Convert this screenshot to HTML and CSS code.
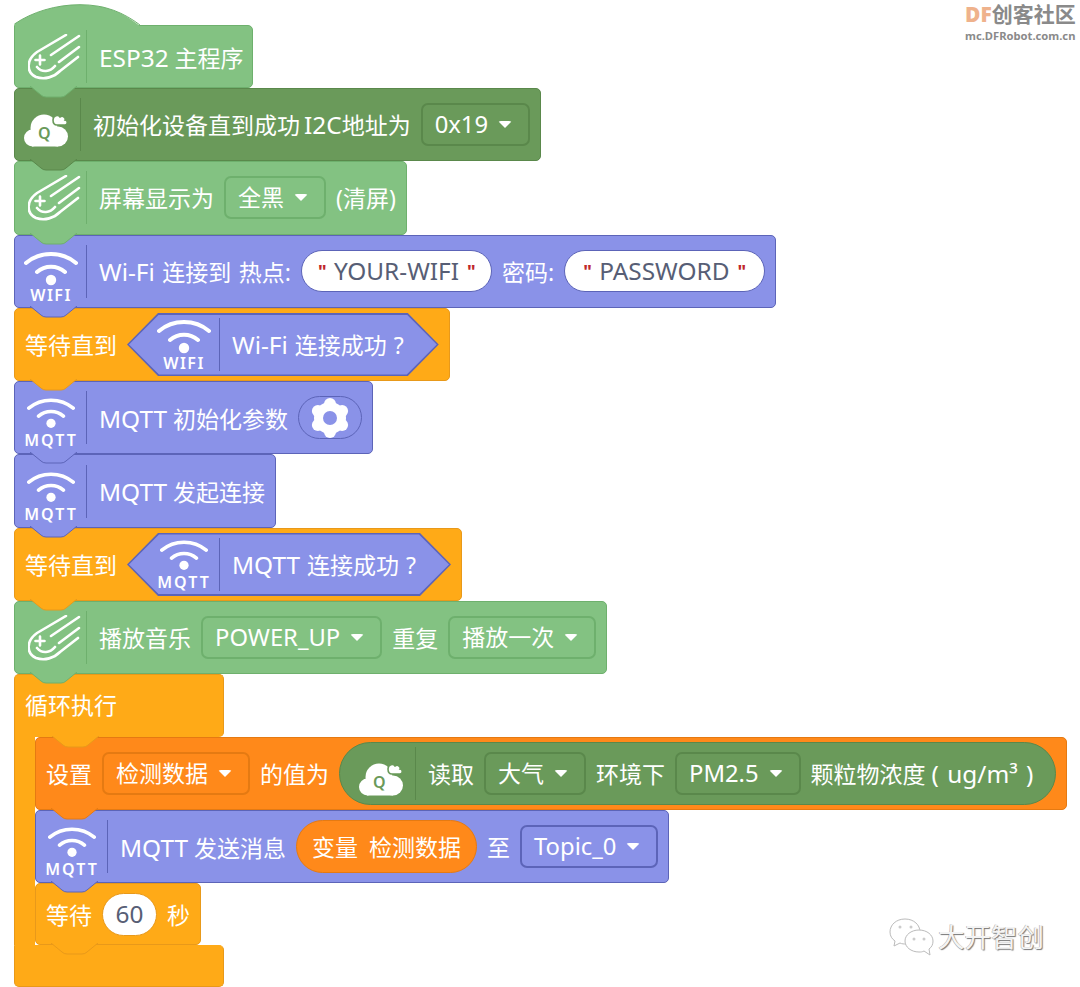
FILE: index.html
```html
<!DOCTYPE html>
<html lang="zh-CN">
<head>
    <meta charset="UTF-8">
    <meta name="viewport" content="width=device-width, initial-scale=1.0">
    <title>ESP32 主程序</title>
    <link rel="stylesheet" href="styles.css">
</head>
<body>
    <!-- Shared icon shapes -->
    <svg class="defs" aria-hidden="true">
        <symbol id="meteor" viewBox="0 0 54 46">
            <path d="M38 1 L9 18 C-2 26 -2 38 8 43 C17 46 26 43 32 37 L50 23 M51 2 L23 21 M51 13 L31 28 M9 33 C14 39 22 38 27 32 M12 21.5 V30.5 M7.5 26 H16.5" fill="none" stroke="#fff" stroke-width="2.6" stroke-linecap="round" stroke-linejoin="round"/>
        </symbol>
        <symbol id="arcs" viewBox="0 0 54 34">
            <path d="M2 11 C16 -1 38 -1 52 11 M13 20 C21 13 33 13 41 20" fill="none" stroke="#fff" stroke-width="4" stroke-linecap="round"/>
            <circle cx="27" cy="28" r="5.2" fill="#fff"/>
        </symbol>
        <symbol id="cloud" viewBox="0 0 44 33">
            <circle cx="8.5" cy="24" r="8.5" fill="#fff"/>
            <circle cx="20" cy="14" r="13.5" fill="#fff"/>
            <circle cx="34" cy="22.5" r="10" fill="#fff"/>
            <rect x="8" y="20" width="26" height="12.5" fill="#fff"/>
            <path d="M29 6 C29 2 34 0 36 3 C39 1 42 4 41 6 C44 6 44 11 41 11 H33 C30 11 29 9 29 6 Z" fill="#fff" stroke="#6a9a5a" stroke-width="1.6"/>
        </symbol>
        <symbol id="gear" viewBox="0 0 40 40">
            <circle cx="20" cy="20" r="16" fill="#fff"/>
            <circle cx="20" cy="6" r="6" fill="#fff"/>
            <circle cx="20" cy="34" r="6" fill="#fff"/>
            <circle cx="7.9" cy="13" r="6" fill="#fff"/>
            <circle cx="32.1" cy="13" r="6" fill="#fff"/>
            <circle cx="7.9" cy="27" r="6" fill="#fff"/>
            <circle cx="32.1" cy="27" r="6" fill="#fff"/>
            <circle cx="20" cy="20" r="7" fill="#8a92e8"/>
        </symbol>
        <symbol id="notch" viewBox="0 0 47 12">
            <path class="notch-fill" d="M0 0 L11 9 Q13 11 16 11 H31 Q34 11 36 9 L47 0 Z"/>
            <path class="notch-line" d="M0 0 L11 9 Q13 11 16 11 H31 Q34 11 36 9 L47 0"/>
        </symbol>
    </svg>

    <div class="board">
        <svg class="hat" width="127" height="22" viewBox="0 0 127 22"><path d="M0.5 22 V20 C18 8 42 0.7 66 0.7 C92 0.7 110 9 126 22 Z" fill="#83c282"/><path d="M0.5 20 C18 8 42 0.7 66 0.7 C92 0.7 110 9 126 21" fill="none" stroke="#6eb06d"/></svg>

        <div class="block green block-hat">
            <div class="icon-slot"><svg class="meteor"><use href="#meteor"/></svg></div>
            <span class="label first-label"><span class="en">ESP32</span> 主程序</span>
            <svg class="tab"><use href="#notch"/></svg>
        </div>

        <div class="block forest">
            <div class="icon-slot icon-slot-cloud"><svg class="cloud"><use href="#cloud"/></svg><span class="cloud-q">Q</span></div>
            <span class="label first-label label-tight">初始化设备直到成功 <span class="en">I2C</span>地址为</span>
            <span class="select"><span class="en">0x19</span></span>
            <svg class="tab"><use href="#notch"/></svg>
        </div>

        <div class="block green">
            <div class="icon-slot"><svg class="meteor"><use href="#meteor"/></svg></div>
            <span class="label first-label">屏幕显示为</span>
            <span class="select">全黑</span>
            <span class="label">(清屏)</span>
            <svg class="tab"><use href="#notch"/></svg>
        </div>

        <div class="block blue">
            <div class="icon-slot icon-slot-wifi"><svg class="arcs"><use href="#arcs"/></svg><span class="icon-label">WIFI</span></div>
            <span class="label first-label label-spaced"><span class="en">Wi-Fi</span> 连接到 热点:</span>
            <span class="text-input"><i>"</i><span class="en">YOUR-WIFI</span><i>"</i></span>
            <span class="label">密码:</span>
            <span class="text-input text-input-wide"><i>"</i><span class="en">PASSWORD</span><i>"</i></span>
            <svg class="tab"><use href="#notch"/></svg>
        </div>

        <div class="block amber">
            <span class="label">等待直到</span>
            <div class="hex blue">
                <div class="icon-slot icon-slot-wifi"><svg class="arcs"><use href="#arcs"/></svg><span class="icon-label">WIFI</span></div>
                <span class="label"><span class="en">Wi-Fi</span> 连接成功 ?</span>
            </div>
            <svg class="tab"><use href="#notch"/></svg>
        </div>

        <div class="block blue">
            <div class="icon-slot icon-slot-wifi"><svg class="arcs arcs-small"><use href="#arcs"/></svg><span class="icon-label">MQTT</span></div>
            <span class="label first-label"><span class="en">MQTT</span> 初始化参数</span>
            <span class="gear-pill"><svg class="gear"><use href="#gear"/></svg></span>
            <svg class="tab"><use href="#notch"/></svg>
        </div>

        <div class="block blue">
            <div class="icon-slot icon-slot-wifi"><svg class="arcs arcs-small"><use href="#arcs"/></svg><span class="icon-label">MQTT</span></div>
            <span class="label first-label"><span class="en">MQTT</span> 发起连接</span>
            <svg class="tab"><use href="#notch"/></svg>
        </div>

        <div class="block amber">
            <span class="label">等待直到</span>
            <div class="hex blue">
                <div class="icon-slot icon-slot-wifi"><svg class="arcs arcs-small"><use href="#arcs"/></svg><span class="icon-label">MQTT</span></div>
                <span class="label"><span class="en">MQTT</span> 连接成功 ?</span>
            </div>
            <svg class="tab"><use href="#notch"/></svg>
        </div>

        <div class="block green">
            <div class="icon-slot"><svg class="meteor"><use href="#meteor"/></svg></div>
            <span class="label first-label">播放音乐</span>
            <span class="select"><span class="en">POWER_UP</span></span>
            <span class="label">重复</span>
            <span class="select">播放一次</span>
            <svg class="tab"><use href="#notch"/></svg>
        </div>

        <!-- Forever loop -->
        <div class="loop amber">
            <div class="loop-head">
                <span class="label">循环执行</span>
                <svg class="tab tab-loop"><use href="#notch"/></svg>
            </div>
            <div class="loop-body">
                <div class="loop-arm"></div>
                <div class="loop-stack">
                    <div class="block orange">
                        <span class="label">设置</span>
                        <span class="select">检测数据</span>
                        <span class="label">的值为</span>
                        <div class="reporter forest">
                            <div class="icon-slot icon-slot-cloud"><svg class="cloud"><use href="#cloud"/></svg><span class="cloud-q">Q</span></div>
                            <span class="label first-label">读取</span>
                            <span class="select">大气</span>
                            <span class="label">环境下</span>
                            <span class="select"><span class="en">PM2.5</span></span>
                            <span class="label">颗粒物浓度 <span class="en wide">( ug/m³ )</span></span>
                        </div>
                        <svg class="tab"><use href="#notch"/></svg>
                    </div>
                    <div class="block blue">
                        <div class="icon-slot icon-slot-wifi"><svg class="arcs arcs-small"><use href="#arcs"/></svg><span class="icon-label">MQTT</span></div>
                        <span class="label first-label"><span class="en">MQTT</span> 发送消息</span>
                        <span class="variable orange">变量 检测数据</span>
                        <span class="label">至</span>
                        <span class="select"><span class="en">Topic_0</span></span>
                        <svg class="tab"><use href="#notch"/></svg>
                    </div>
                    <div class="block amber block-wait">
                        <span class="label">等待</span>
                        <span class="number"><span class="en">60</span></span>
                        <span class="label">秒</span>
                        <svg class="tab"><use href="#notch"/></svg>
                    </div>
                </div>
            </div>
            <div class="loop-foot"></div>
        </div>
    </div>

    <!-- Watermarks -->
    <div class="mark-df">
        <div class="mark-df-title"><b>DF</b>创客社区</div>
        <div class="mark-df-url">mc.DFRobot.com.cn</div>
    </div>
    <div class="mark-wechat">
        <svg width="46" height="38" viewBox="0 0 46 38">
            <path d="M17 1 C8 1 2 7 2 14 C2 18 4 21 7 23 L6 28 L12 25 C14 26 16 26 18 26 C28 26 32 20 32 14 C32 7 26 1 17 1 Z" fill="#fff" stroke="#bbb"/>
            <path d="M31 12 C23 12 17 17 17 23 C17 29 23 34 31 34 C33 34 34 34 36 33 L42 37 L41 31 C44 29 45 26 45 23 C45 17 39 12 31 12 Z" fill="#fff" stroke="#bbb"/>
            <circle cx="12" cy="9" r="1.5" fill="#ccc"/><circle cx="23" cy="9" r="1.5" fill="#ccc"/>
            <circle cx="26" cy="21" r="1.5" fill="#ccc"/><circle cx="36" cy="21" r="1.5" fill="#ccc"/>
        </svg>
        <span class="mark-wechat-name">大开智创</span>
    </div>
</body>
</html>
```

FILE: styles.css
```css
* {
    box-sizing: border-box;
}
body {
    margin: 0;
    background-color: white;
    font-family: "Noto Sans", "Noto Sans CJK SC", sans-serif;
    font-size: 23px;
    line-height: 1;
    color: white;
    position: relative;
    height: 987px;
    overflow: hidden;
}
.defs {
    width: 0;
    height: 0;
    display: block;
}
.board {
    display: flex;
    flex-direction: column;
    align-items: flex-start;
    padding: 4px 0 0 14px;
}
.hat {
    display: block;
    margin-bottom: -1px;
    position: relative;
    z-index: 1;
}

/* Palette */
.green { --fill: #83c282; --line: #6eb06d; }
.forest { --fill: #6a9a5a; --line: #5a884b; }
.blue { --fill: #8a92e8; --line: #5c64b8; }
.amber { --fill: #ffaa17; --line: #e8991a; }
.orange { --fill: #ff891a; --line: #e57a12; }

/* Latin runs are set a little larger than the CJK around them */
.en {
    font-size: 24.4px;
}
.select .en {
    font-size: 23.8px;
}
.wide {
    word-spacing: 2px;
}

/* Blocks */
.block {
    position: relative;
    display: flex;
    align-items: center;
    gap: 10px;
    width: fit-content;
    height: 73.3px;
    padding: 0 10px;
    background-color: var(--fill);
    border: 1px solid var(--line);
    border-radius: 5px;
    white-space: nowrap;
}
.block-hat {
    height: 63px;
    padding: 1px 8px 0 10px;
    border-top-left-radius: 0;
}
.block-hat .icon-slot {
    margin-top: -1px;
}
.block-wait {
    height: 62px;
}
.tab {
    position: absolute;
    left: 15px;
    top: 100%;
    width: 47px;
    height: 12px;
    margin-top: -1px;
    z-index: 2;
}
.tab-loop {
    left: 37px;
}
.notch-fill {
    fill: var(--fill);
}
.notch-line {
    fill: none;
    stroke: var(--line);
}
.label {
    flex: none;
    padding-top: 2px;
}
.first-label {
    margin-left: 2px;
}
.label-spaced {
    word-spacing: 1.5px;
}
.label-tight {
    word-spacing: -2px;
}

/* Icon column with its divider */
.icon-slot {
    flex: none;
    position: relative;
    display: flex;
    flex-direction: column;
    align-items: center;
    width: 62px;
    height: 53px;
    border-right: 1px solid var(--line);
}
.meteor {
    width: 54px;
    height: 46px;
    margin-top: 4px;
    margin-left: -1px;
}
.icon-slot-wifi {
    justify-content: flex-start;
    padding-right: 9px;
}
.arcs {
    width: 54px;
    height: 34px;
    margin-top: 7px;
    flex: none;
}
.arcs-small {
    width: 48px;
    height: 31px;
    margin-top: 7px;
}
.hex .arcs {
    margin-top: 2px;
}
.icon-label {
    margin-top: 1px;
    font-size: 16px;
    font-weight: 600;
    letter-spacing: 1.5px;
}
.arcs-small + .icon-label {
    margin-top: 3px;
    letter-spacing: 2px;
}
.icon-slot-cloud {
    width: 56px;
}
.cloud {
    flex: none;
    width: 44px;
    height: 33px;
    margin-top: 16px;
    margin-left: -14px;
}
.cloud-q {
    position: absolute;
    left: 13px;
    top: 27px;
    font-size: 16px;
    font-weight: 600;
    color: #6a9a5a;
}

/* Inputs */
.select {
    flex: none;
    display: flex;
    align-items: center;
    gap: 10px;
    height: 43px;
    padding: 0 16px 0 12px;
    background-color: var(--fill);
    border: 2px solid var(--line);
    border-radius: 7px;
}
.select::after {
    content: "";
    border-left: 7px solid transparent;
    border-right: 7px solid transparent;
    border-top: 7px solid white;
    border-radius: 3px;
}
.text-input {
    flex: none;
    display: flex;
    align-items: center;
    gap: 8px;
    height: 42px;
    padding: 0 16px;
    background-color: white;
    border: 1.5px solid var(--line);
    border-radius: 21px;
    color: #575e75;
}
.text-input-wide {
    padding: 0 18px;
}
.text-input i {
    width: 8px;
    font-style: normal;
    font-size: 18px;
    font-weight: 700;
    color: #c0282c;
}
.number {
    flex: none;
    display: flex;
    align-items: center;
    justify-content: center;
    width: 55px;
    height: 43px;
    background-color: white;
    border: 1.5px solid var(--line);
    border-radius: 22px;
    color: #575e75;
}
.gear-pill {
    flex: none;
    display: flex;
    align-items: center;
    justify-content: center;
    width: 64px;
    height: 43px;
    background-color: var(--fill);
    border: 1.5px solid var(--line);
    border-radius: 22px;
}
.gear {
    width: 40px;
    height: 40px;
}
.variable {
    flex: none;
    display: flex;
    align-items: center;
    height: 53px;
    padding: 2px 15px 0;
    word-spacing: 5px;
    background-color: var(--fill);
    border: 1.5px solid var(--line);
    border-radius: 27px;
}
.reporter {
    flex: none;
    display: flex;
    align-items: center;
    gap: 10px;
    height: 63px;
    padding: 0 22px 0 20px;
    background-color: var(--fill);
    border: 1.5px solid var(--line);
    border-radius: 32px;
}

/* Hexagon boolean: outer layer is the outline, ::before is the fill */
.hex {
    position: relative;
    flex: none;
    display: flex;
    align-items: center;
    gap: 12px;
    height: 63px;
    padding: 0 35px 0 31px;
    word-spacing: 1px;
    background-color: var(--line);
    clip-path: polygon(31px 0, calc(100% - 31px) 0, 100% 50%, calc(100% - 31px) 100%, 31px 100%, 0 50%);
}
.hex::before {
    content: "";
    position: absolute;
    inset: 1.5px 2px;
    background-color: var(--fill);
    clip-path: polygon(30px 0, calc(100% - 30px) 0, 100% 50%, calc(100% - 30px) 100%, 30px 100%, 0 50%);
}
.hex > * {
    position: relative;
}

/* Forever loop */
.loop {
    display: flex;
    flex-direction: column;
    align-items: flex-start;
    width: 100%;
}
.loop-head {
    position: relative;
    display: flex;
    align-items: center;
    width: 210px;
    height: 62.5px;
    padding: 0 10px 4px;
    background-color: var(--fill);
    border: 1px solid var(--line);
    border-bottom: none;
    border-radius: 5px 5px 5px 0;
}
.loop-body {
    display: flex;
    width: 100%;
}
.loop-arm {
    flex: none;
    width: 21px;
    background-color: var(--fill);
    border-left: 1px solid var(--line);
}
.loop-stack {
    display: flex;
    flex-direction: column;
    align-items: flex-start;
}
.loop-foot {
    width: 210px;
    height: 42px;
    background-color: var(--fill);
    border: 1px solid var(--line);
    border-top-color: var(--fill);
    border-radius: 0 5px 5px 5px;
}

/* Watermarks */
.mark-df {
    position: absolute;
    left: 965px;
    top: 4px;
    width: 112px;
    font-weight: 700;
    color: #8a8a8a;
}
.mark-df-title {
    font-size: 21px;
    white-space: nowrap;
}
.mark-df-title b {
    color: #efb28c;
}
.mark-df-url {
    margin-top: 5px;
    font-size: 11.2px;
    white-space: nowrap;
}
.mark-wechat {
    position: absolute;
    left: 888px;
    top: 918px;
    display: flex;
    align-items: center;
    gap: 4px;
}
.mark-wechat-name {
    font-size: 26.5px;
    color: #f4f4f4;
    text-shadow: 1px 1px 1px #777, -0.5px -0.5px 0 #aaa;
}
```
